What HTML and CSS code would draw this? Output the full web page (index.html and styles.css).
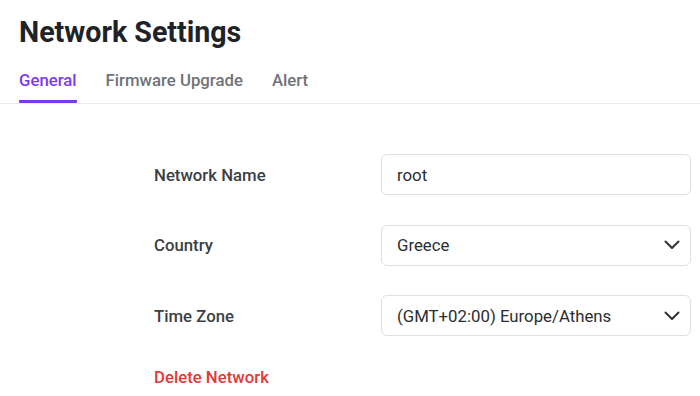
FILE: index.html
```html
<!DOCTYPE html>
<html>
<head>
<meta charset="utf-8">
<link rel="stylesheet" href="styles.css">
</head>
<body>
<div class="page">
  <h1 class="title">Network Settings</h1>
  <nav class="tabs">
    <a class="tab active">General</a>
    <a class="tab">Firmware Upgrade</a>
    <a class="tab">Alert</a>
  </nav>
  <form class="form">
    <div class="row">
      <label class="label">Network Name</label>
      <div class="field"><span class="value">root</span></div>
    </div>
    <div class="row">
      <label class="label">Country</label>
      <div class="field select"><span class="value">Greece</span>
        <svg class="chev" width="16" height="10" viewBox="0 0 16 10"><path d="M1.5 1.5 L8 8 L14.5 1.5" fill="none" stroke="#333" stroke-width="2" stroke-linecap="round" stroke-linejoin="round"/></svg>
      </div>
    </div>
    <div class="row">
      <label class="label">Time Zone</label>
      <div class="field select"><span class="value">(GMT+02:00) Europe/Athens</span>
        <svg class="chev" width="16" height="10" viewBox="0 0 16 10"><path d="M1.5 1.5 L8 8 L14.5 1.5" fill="none" stroke="#333" stroke-width="2" stroke-linecap="round" stroke-linejoin="round"/></svg>
      </div>
    </div>
    <div class="row del-row">
      <a class="delete">Delete Network</a>
    </div>
  </form>
</div>
</body>
</html>
```
FILE: styles.css
```css
* { box-sizing: border-box; }
html, body { margin: 0; padding: 0; background: #fff; }
body { font-family: Roboto, "Noto Sans", sans-serif; color: #222; }
.page { width: 700px; }
.title {
  margin: 0;
  padding: 15px 0 0 19px;
  font-size: 28.6px;
  font-weight: 700;
  line-height: 34px;
  color: #1f2328;
}
.tabs {
  display: flex;
  gap: 29px;
  padding: 22px 0 0 19px;
  border-bottom: 1px solid #e8eaed;
  margin-top: 0;
}
.tab {
  font-size: 16.75px;
  font-weight: 500;
  color: #6f7377;
  line-height: 19px;
  padding-bottom: 10px;
  border-bottom: 3px solid transparent;
}
.tab.active {
  color: #7c3aed;
  border-bottom-color: #7c3aed;
  border-radius: 1px;
}
.form {
  display: flex;
  flex-direction: column;
  gap: 29.5px;
  padding: 50px 0 0 154px;
}
.row {
  display: grid;
  grid-template-columns: 227px 310px;
  align-items: center;
}
.label {
  font-size: 16.75px;
  font-weight: 500;
  color: #3c3f43;
}
.field {
  height: 41px;
  border: 1px solid #dcdfe3;
  border-radius: 6px;
  display: flex;
  align-items: center;
  justify-content: space-between;
  padding: 0 10px 0 15px;
}
.value {
  font-size: 16.8px;
  color: #2b2e31;
}
.chev { display: block; }
.del-row { display: block; padding-top: 1px; }
.delete {
  font-size: 16.75px;
  font-weight: 500;
  color: #e53935;
}
```
